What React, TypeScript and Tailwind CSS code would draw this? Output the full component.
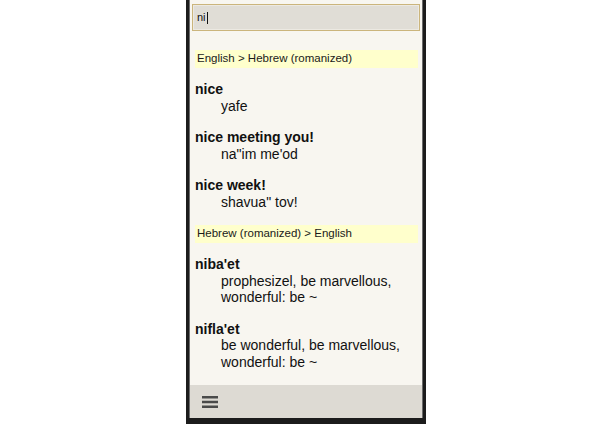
type Entry = {
  term: string;
  lines: string[];
};

type Section = {
  title: string;
  entries: Entry[];
};

const sections: Section[] = [
  {
    title: "English > Hebrew (romanized)",
    entries: [
      { term: "nice", lines: ["yafe"] },
      { term: "nice meeting you!", lines: ['na"im me\'od'] },
      { term: "nice week!", lines: ['shavua" tov!'] },
    ],
  },
  {
    title: "Hebrew (romanized) > English",
    entries: [
      {
        term: "niba'et",
        lines: ["prophesizel, be marvellous,", "wonderful: be ~"],
      },
      {
        term: "nifla'et",
        lines: ["be wonderful, be marvellous,", "wonderful: be ~"],
      },
    ],
  },
];

function SearchBox() {
  return (
    <div className="mx-[2px] mt-[4px] flex h-[27px] items-center border border-[#cbb57c] bg-[#e0ddd6] px-[4px] shadow-[inset_0_0_0_1px_#ece9e2]">
      <span className="text-[11px] text-[#111]">ni</span>
      <span className="ml-px h-[12px] w-px bg-[#111]" />
    </div>
  );
}

function MenuIcon() {
  return (
    <svg width="16" height="14" viewBox="0 0 16 14" className="text-[#4a4a4a]">
      <rect x="0" y="1" width="16" height="2.5" fill="currentColor" />
      <rect x="0" y="5.75" width="16" height="2.5" fill="currentColor" />
      <rect x="0" y="10.5" width="16" height="2.5" fill="currentColor" />
    </svg>
  );
}

function ResultList() {
  return (
    <div className="flex flex-1 flex-col gap-[15px] pl-[5px] pr-[4px] pt-[19px]">
      {sections.map((section) => (
        <div key={section.title} className="flex flex-col gap-[13px]">
          <div className="flex h-[18px] items-center bg-[#ffffcc] px-[2px] text-[11.5px] text-[#1a1a1a]">
            {section.title}
          </div>
          <div className="flex flex-col gap-[15px]">
            {section.entries.map((entry) => (
              <div key={entry.term} className="flex flex-col text-[14px] leading-[16.5px] text-[#111]">
                <span className="font-bold">{entry.term}</span>
                {entry.lines.map((line, i) => (
                  <span key={i} className="pl-[26px]">
                    {line}
                  </span>
                ))}
              </div>
            ))}
          </div>
        </div>
      ))}
    </div>
  );
}

export default function App() {
  return (
    <div
      className="flex h-[424px] w-[615px] bg-white pl-[186px]"
      style={{ fontFamily: '"Liberation Sans", Arial, sans-serif' }}
    >
      <div className="flex h-full w-[240px] flex-col border-x-[3px] border-b-[6px] border-[#1c1c1c] bg-[#1c1c1c]">
        <div className="flex flex-1 flex-col overflow-hidden border-x border-[#6b6b6b] bg-[#f8f6f0]">
          <SearchBox />
          <ResultList />
          <div className="flex h-[33px] items-center bg-[#dddad3] pl-[12px]">
            <MenuIcon />
          </div>
        </div>
      </div>
    </div>
  );
}
